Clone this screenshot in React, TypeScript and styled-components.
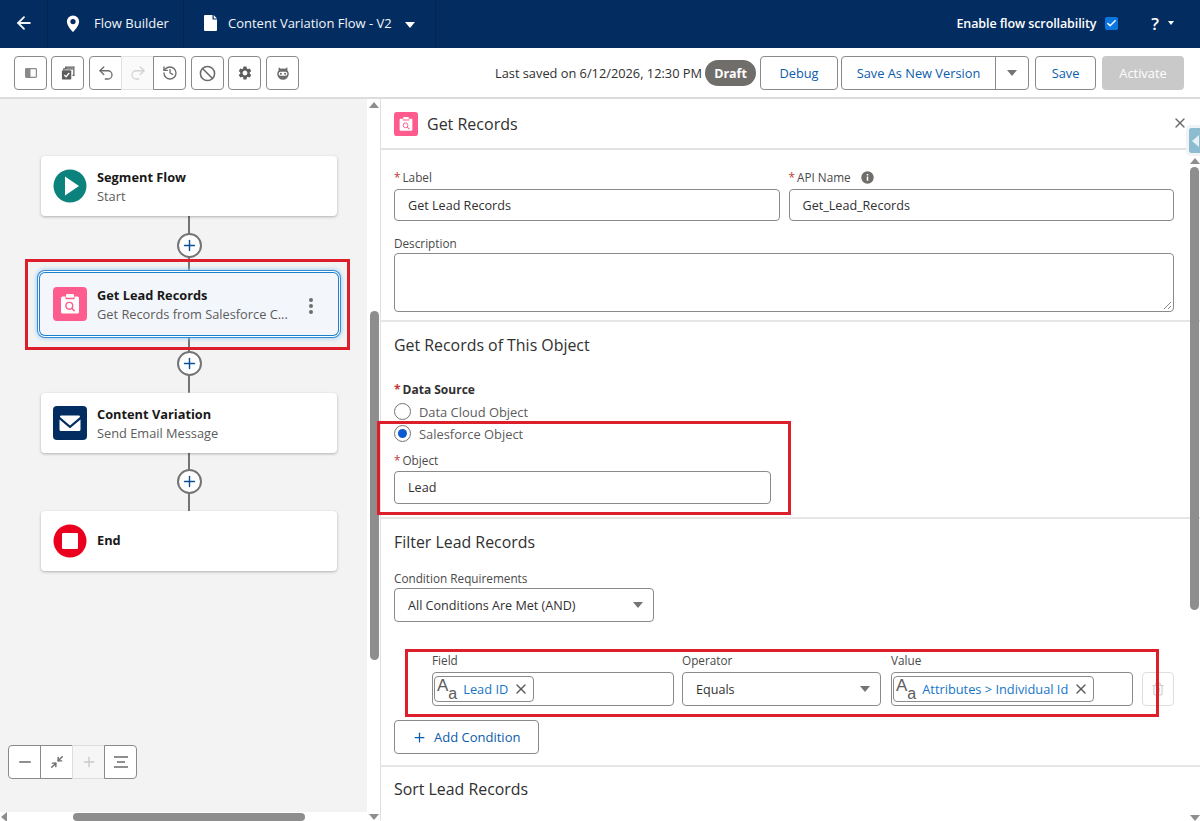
import React from "react";
import styled, { createGlobalStyle } from "styled-components";
import { ArrowLeft, Undo2, Redo2, History, Ban, Check, X, Plus, Minus, Minimize2, Trash2 } from "lucide-react";
import { MdSettings } from "react-icons/md";

const font = `"Open Sans", "Noto Sans", "Liberation Sans", sans-serif`;

const Global = createGlobalStyle`
  html, body { margin: 0; padding: 0; height: 821px; overflow: hidden; background: #fff; }
  body { font-family: ${font}; font-size: 12.8px; color: #181818; }
  * { box-sizing: border-box; }
`;

const Page = styled.div`
  position: relative;
  width: 1200px;
  height: 821px;
  display: flex;
  flex-direction: column;
  overflow: hidden;
`;

const Header = styled.header`
  height: 48px;
  flex: none;
  background: #032d60;
  color: #fff;
  display: flex;
  align-items: stretch;
`;
const HeaderCell = styled.div<{ $w: number; $pad?: number }>`
  width: ${(p) => p.$w}px;
  display: flex;
  align-items: center;
  border-right: 1px solid #02264f;
  font-size: 13px;
  color: #f3f5f8;
  padding: 0 0 2px ${(p) => p.$pad ?? 18}px;
`;
const HeaderLabel = styled.span<{ $ml: number }>`
  margin-left: ${(p) => p.$ml}px;
  white-space: nowrap;
`;
const Caret = styled.span<{ $size?: number; $color?: string }>`
  display: inline-block;
  width: 0;
  height: 0;
  border-left: ${(p) => p.$size ?? 5}px solid transparent;
  border-right: ${(p) => p.$size ?? 5}px solid transparent;
  border-top: ${(p) => (p.$size ?? 5) + 1}px solid ${(p) => p.$color ?? "#fff"};
`;
const HeaderRight = styled.div`
  margin-left: auto;
  display: flex;
  align-items: center;
  padding: 0 26px 2px 0;
  font-size: 12.5px;
  letter-spacing: -0.1px;
  font-weight: 600;
  color: #fff;
`;
const CheckBox = styled.span`
  width: 13px;
  height: 13px;
  margin-left: 9px;
  border-radius: 2px;
  background: #0b76e0;
  display: flex;
  align-items: center;
  justify-content: center;
`;
const Help = styled.span`
  margin-left: 33px;
  margin-right: 9px;
  font-size: 17px;
  font-weight: 600;
`;

const Toolbar = styled.div`
  height: 51px;
  flex: none;
  display: flex;
  align-items: center;
  padding: 1px 16px 0 14px;
  border-bottom: 2px solid #dcdcdc;
`;
const IconBtn = styled.button<{ $mr?: number }>`
  width: 33px;
  height: 34px;
  padding: 0;
  margin-right: ${(p) => p.$mr ?? 4}px;
  background: #fff;
  border: 1px solid #8a8a8a;
  border-radius: 4px;
  display: flex;
  align-items: center;
  justify-content: center;
  color: #6b6b6b;
`;
const BtnGroup = styled.div`
  display: flex;
  margin-right: 5px;
  margin-left: 1px;
`;
const GroupBtn = styled.button<{ $disabled?: boolean }>`
  width: 33px;
  height: 34px;
  padding: 0;
  margin-left: -1px;
  background: ${(p) => (p.$disabled ? "#fafafa" : "#fff")};
  border: 1px solid ${(p) => (p.$disabled ? "#e2e2e2" : "#8a8a8a")};
  display: flex;
  align-items: center;
  justify-content: center;
  color: ${(p) => (p.$disabled ? "#d2d2d2" : "#6b6b6b")};
  &:first-child { border-radius: 4px 0 0 4px; margin-left: 0; }
  &:last-child { border-radius: 0 4px 4px 0; }
`;
const ToolRight = styled.div`
  margin-left: auto;
  display: flex;
  align-items: center;
`;
const Saved = styled.span`
  font-size: 12.8px;
  color: #303030;
  white-space: nowrap;
`;
const Draft = styled.span`
  margin-left: 3px;
  width: 51px;
  height: 26px;
  background: #706e6b;
  border-radius: 13px;
  color: #fff;
  font-weight: 700;
  font-size: 12.5px;
  display: flex;
  align-items: center;
  justify-content: center;
`;
const OutlineBtn = styled.button<{ $w: number; $ml?: number }>`
  width: ${(p) => p.$w}px;
  height: 34px;
  margin-left: ${(p) => p.$ml ?? 4}px;
  background: #fff;
  border: 1px solid #8a8a8a;
  border-radius: 4px;
  color: #0b5cab;
  font-family: ${font};
  font-size: 12.8px;
  padding: 0;
`;
const SplitBtn = styled.div`
  margin-left: 3px;
  width: 188px;
  height: 34px;
  border: 1px solid #8a8a8a;
  border-radius: 4px;
  display: flex;
  color: #0b5cab;
  font-size: 12.8px;
`;
const SplitMain = styled.span`
  flex: 1;
  display: flex;
  align-items: center;
  justify-content: center;
  border-right: 1px solid #8a8a8a;
`;
const SplitCaret = styled.span`
  width: 32px;
  display: flex;
  align-items: center;
  justify-content: center;
`;
const ActivateBtn = styled.button`
  width: 82px;
  height: 34px;
  margin-left: 6px;
  background: #c9c9c9;
  color: #fff;
  border: none;
  border-radius: 4px;
  font-family: ${font};
  font-size: 12.8px;
`;

const Body = styled.div`
  flex: 1;
  display: flex;
  min-height: 0;
`;
const CanvasColumn = styled.div`
  position: relative;
  width: 381px;
  flex: none;
  border-right: 1px solid #e0e0e0;
  overflow: hidden;
`;
const Canvas = styled.div`
  width: 367px;
  height: 713px;
  background: #f3f3f3;
  padding: 57px 0 0 41px;
  display: flex;
  flex-direction: column;
`;
const Node = styled.div<{ $selected?: boolean }>`
  width: 296px;
  height: 60px;
  flex: none;
  background: ${(p) => (p.$selected ? "#f3f6fb" : "#fff")};
  border-radius: 4px;
  display: flex;
  align-items: center;
  padding: 0 0 0 12px;
  position: relative;
  box-shadow: ${(p) =>
    p.$selected
      ? "0 0 0 1px #f3f6fb, 0 0 0 2px #1b7fcf, 0 0 0 3px #fff, 0 0 0 4px #2f8ddb, 0 0 5px 4px #8cc4ef"
      : "0 1px 3px rgba(0,0,0,.28)"};
`;
const NodeText = styled.div<{ $solo?: boolean }>`
  margin-left: 10px;
  padding: ${(p) => (p.$solo ? "0 0 2px" : "2px 0 0")};
  min-width: 0;
  line-height: 19px;
`;
const NodeTitle = styled.div`
  font-weight: 700;
  color: #181818;
`;
const NodeSub = styled.div`
  color: #5c5c5c;
  white-space: nowrap;
`;
const NodeMenu = styled.span`
  position: absolute;
  right: 24px;
  top: 24px;
  display: flex;
  flex-direction: column;
  gap: 2px;
`;
const Dot = styled.i`
  width: 4px;
  height: 4px;
  border-radius: 50%;
  background: #706e6b;
`;
const Connector = styled.div`
  width: 296px;
  height: 58.4px;
  flex: none;
  display: flex;
  align-items: center;
  justify-content: center;
  background: linear-gradient(#747474, #747474) center / 2px 100% no-repeat;
`;
const PlusCircle = styled.span`
  width: 25px;
  height: 25px;
  border-radius: 50%;
  background: #fff;
  border: 2px solid #747474;
  display: flex;
  align-items: center;
  justify-content: center;
  color: #0b4f94;
`;
const ZoomBar = styled.div`
  position: absolute;
  left: 8px;
  top: 646px;
  display: flex;
`;
const ZoomBtn = styled.span<{ $disabled?: boolean }>`
  width: 33px;
  height: 34px;
  margin-left: -1px;
  background: ${(p) => (p.$disabled ? "#f6f6f6" : "#fff")};
  border: 1px solid ${(p) => (p.$disabled ? "#dedede" : "#8a8a8a")};
  color: ${(p) => (p.$disabled ? "#c9c9c9" : "#6b6b6b")};
  display: flex;
  align-items: center;
  justify-content: center;
  &:first-child { margin-left: 0; border-radius: 4px 0 0 4px; }
  &:last-child { border-radius: 0 4px 4px 0; }
`;
const VThumb = styled.div<{ $left: number; $top: number; $h: number }>`
  position: absolute;
  left: ${(p) => p.$left}px;
  top: ${(p) => p.$top}px;
  width: 9px;
  height: ${(p) => p.$h}px;
  border-radius: 5px;
  background: #8e8e8e;
`;
const HThumb = styled.div`
  position: absolute;
  left: 73px;
  top: 714px;
  width: 232px;
  height: 8px;
  border-radius: 4px;
  background: #8e8e8e;
`;
const Arrow = styled.span<{ $dir: "up" | "down" | "left"; $left: number; $top: number }>`
  position: absolute;
  left: ${(p) => p.$left}px;
  top: ${(p) => p.$top}px;
  width: 0;
  height: 0;
  ${(p) =>
    p.$dir === "up"
      ? "border-left:5px solid transparent;border-right:5px solid transparent;border-bottom:6px solid #8e8e8e;"
      : p.$dir === "down"
      ? "border-left:5px solid transparent;border-right:5px solid transparent;border-top:6px solid #8e8e8e;"
      : "border-top:5px solid transparent;border-bottom:5px solid transparent;border-right:6px solid #8e8e8e;"}
`;

const Panel = styled.div`
  position: relative;
  flex: 1;
  min-width: 0;
  overflow: hidden;
`;
const PanelHeader = styled.div`
  height: 51px;
  display: flex;
  align-items: center;
  padding: 0 0 0 13px;
  border-bottom: 2px solid #e2e2e2;
  font-size: 16px;
  color: #303030;
`;
const PanelTitle = styled.span`
  margin-left: 9px;
`;
const Close = styled.span`
  position: absolute;
  right: 12px;
  top: 16px;
  color: #6b6b6b;
  display: flex;
`;
const SideTab = styled.div`
  position: absolute;
  left: 805px;
  top: 26px;
  width: 15px;
  height: 31px;
  background: #8dbcd0;
  border: 3px solid #f1f4f6;
  border-right: none;
  border-radius: 5px 0 0 5px;
  display: flex;
  align-items: center;
  padding-left: 3px;
  &::before {
    content: "";
    border-top: 6px solid transparent;
    border-bottom: 6px solid transparent;
    border-right: 7px solid #e8f1f5;
  }
`;
const Section = styled.section<{ $h: number; $bare?: boolean }>`
  display: flow-root;
  height: ${(p) => p.$h}px;
  padding: 0 26px 0 13px;
  border-bottom: ${(p) => (p.$bare ? "none" : "2px solid #e6e6e6")};
`;
const Row = styled.div<{ $mt: number }>`
  display: flex;
  gap: 9px;
  margin-top: ${(p) => p.$mt}px;
`;
const Field = styled.div<{ $w?: number; $ml?: number }>`
  width: ${(p) => (p.$w ? `${p.$w}px` : "auto")};
  flex: ${(p) => (p.$w ? "none" : "1")};
  margin-left: ${(p) => p.$ml ?? 0}px;
`;
const Label = styled.label<{ $mb?: number }>`
  display: flex;
  align-items: center;
  height: 16px;
  margin-bottom: ${(p) => p.$mb ?? 4}px;
  font-size: 11.75px;
  color: #4a4a4a;
`;
const Req = styled.span`
  color: #c23934;
  margin-right: 2px;
`;
const InfoIcon = styled.svg`
  margin-left: 10px;
`;
const Input = styled.div<{ $h?: number }>`
  height: ${(p) => p.$h ?? 33}px;
  border: 1px solid #8a8a8a;
  border-radius: 4px;
  background: #fff;
  display: flex;
  align-items: center;
  padding: 0 13px;
  color: #303030;
  font-size: 12.6px;
  position: relative;
`;
const SelectCaret = styled.span`
  margin-left: auto;
  margin-right: -3px;
  display: flex;
`;
const ResizeGrip = styled.svg`
  position: absolute;
  right: 1px;
  bottom: 1px;
`;
const SectionTitle = styled.h2<{ $mt: number }>`
  margin: ${(p) => p.$mt}px 0 0;
  font-size: 15.9px;
  font-weight: 400;
  line-height: 22px;
  color: #303030;
`;
const BoldLabel = styled.div`
  margin-top: 26px;
  font-size: 12px;
  font-weight: 700;
  color: #303030;
  line-height: 16px;
`;
const RadioRow = styled.div<{ $mt: number }>`
  display: flex;
  align-items: center;
  margin-top: ${(p) => p.$mt}px;
  height: 17px;
  color: #5c5c5c;
  font-size: 12.9px;
`;
const Radio = styled.span<{ $on?: boolean }>`
  width: 17px;
  height: 17px;
  border-radius: 50%;
  border: 1px solid #747474;
  background: #fff;
  margin-right: 8px;
  display: flex;
  align-items: center;
  justify-content: center;
  &::after {
    content: "";
    display: ${(p) => (p.$on ? "block" : "none")};
    width: 9px;
    height: 9px;
    border-radius: 50%;
    background: #0b5cd0;
  }
`;
const ConditionRow = styled.div`
  display: flex;
  margin: 30px 0 0 38px;
  align-items: flex-end;
`;
const Pill = styled.span`
  height: 26px;
  margin-left: -12px;
  border: 1px solid #8a8a8a;
  border-radius: 4px;
  display: flex;
  align-items: center;
  padding: 0 4px 0 2px;
  color: #1576c8;
  font-size: 12.8px;
  white-space: nowrap;
`;
const PillIcon = styled.span`
  font-family: "Liberation Sans", sans-serif;
  color: #5c5c5c;
  display: flex;
  align-items: flex-end;
  line-height: 1;
  margin: 0 6px 7px 0;
  font-size: 17px;
`;
const PillIconSmall = styled.span`
  margin-left: 0;
  margin-bottom: -8px;
  font-size: 16px;
`;
const PillClose = styled.span`
  display: flex;
  color: #5c5c5c;
  margin-left: 5px;
`;
const TrashBtn = styled.span`
  width: 32px;
  height: 34px;
  margin-left: 9px;
  border: 1px solid #dedede;
  border-radius: 4px;
  display: flex;
  align-items: center;
  justify-content: center;
  color: #cfcfcf;
`;
const AddBtn = styled.div`
  margin-top: 14px;
  width: 145px;
  height: 34px;
  border: 1px solid #8a8a8a;
  border-radius: 4px;
  display: flex;
  align-items: center;
  padding-left: 17px;
  color: #0b5cab;
  font-size: 13px;
`;
const AddLabel = styled.span`
  margin-left: 7px;
`;
const Highlight = styled.div<{ $l: number; $t: number; $w: number; $h: number }>`
  position: absolute;
  left: ${(p) => p.$l}px;
  top: ${(p) => p.$t}px;
  width: ${(p) => p.$w}px;
  height: ${(p) => p.$h}px;
  border: 3px solid #dc1f2b;
  pointer-events: none;
`;

const MapPin = () => (
  <svg width="14" height="17" viewBox="1.5 0 13 17.5"><path fill="#fff" fillRule="evenodd" d="M8 0.5a6.3 6.3 0 0 0-6.3 6.3C1.7 11 6.5 16 7.4 17.1c.3.4.9.4 1.2 0C9.5 16 14.3 11 14.3 6.8A6.3 6.3 0 0 0 8 .5zm0 8.9a2.7 2.7 0 1 1 0-5.4 2.7 2.7 0 0 1 0 5.4z" /></svg>
);
const FileIcon = () => (
  <svg width="13" height="16" viewBox="0 0 13 16"><path fill="#fff" d="M1 0h7.5v4.5H13V15a1 1 0 0 1-1 1H1a1 1 0 0 1-1-1V1a1 1 0 0 1 1-1zm8.7 0L13 3.4H9.7z" /></svg>
);
const PanelIcon = () => (
  <svg width="12" height="10" viewBox="0 0 12 10"><rect x=".6" y=".6" width="10.8" height="8.8" rx=".8" fill="none" stroke="#8a8a8a" strokeWidth="1.2" /><rect x="1" y="1" width="4.5" height="8" fill="#8a8a8a" /></svg>
);
const CopyCheck = () => (
  <svg width="14" height="14" viewBox="0 0 15 15"><path fill="none" stroke="#5c5c5c" strokeWidth="1.3" d="M5 2.5V1.2h8.8V10h-1.5M3 4.5V3h9v1" /><rect x="1" y="4.5" width="10" height="10" rx="1" fill="#5c5c5c" /><path fill="none" stroke="#fff" strokeWidth="1.4" d="M3.4 9.5l2 2 3.4-4" /></svg>
);
const BotIcon = () => (
  <svg width="14" height="14" viewBox="0 0 16 16"><path fill="#6b6b6b" d="M3 1.5l2.6 1.7a7 7 0 0 1 4.8 0L13 1.5v3.4a6.6 6.6 0 1 1-10 0z" /><rect x="3" y="6.6" width="10" height="4.6" rx="2.3" fill="#fff" /><circle cx="5.6" cy="8.9" r="1.2" fill="#6b6b6b" /><circle cx="10.4" cy="8.9" r="1.2" fill="#6b6b6b" /></svg>
);
const PlayIcon = () => (
  <svg width="34" height="34" viewBox="0 0 34 34"><circle cx="17" cy="17" r="16.5" fill="#0b827c" /><path fill="#fff" d="M12 7.5v19L26 17z" /></svg>
);
const RecordsIcon = ({ size = 34 }: { size?: number }) => (
  <svg width={size} height={size} viewBox="0 0 34 34"><rect width="34" height="34" rx="4" fill="#fe5c8f" /><path fill="#fff" fillRule="evenodd" d="M9.5 9.5h3v2.7h9V9.5h3a1.5 1.5 0 0 1 1.5 1.5v14a1.5 1.5 0 0 1-1.5 1.5h-15A1.5 1.5 0 0 1 8 25V11a1.5 1.5 0 0 1 1.5-1.5z" /><rect x="13" y="7" width="8" height="3.8" rx="1.2" fill="#fff" /><circle cx="16.3" cy="18.8" r="3.4" fill="none" stroke="#fe5c8f" strokeWidth="1.4" /><path stroke="#fe5c8f" strokeWidth="1.5" d="M18.8 21.3l2.8 2.8" /></svg>
);
const MailIcon = () => (
  <svg width="34" height="34" viewBox="0 0 34 34"><rect width="34" height="34" rx="4" fill="#032d60" /><path fill="#fff" d="M8 9.5h18a1 1 0 0 1 .7 1.7L17 19.5 7.3 11.2A1 1 0 0 1 8 9.5zM6.5 13.5l9.8 8.3c.4.3 1 .3 1.4 0l9.8-8.3V23.5a1.5 1.5 0 0 1-1.5 1.5H8a1.5 1.5 0 0 1-1.5-1.5z" /></svg>
);
const EndIcon = () => (
  <svg width="34" height="34" viewBox="0 0 34 34"><circle cx="17" cy="17" r="16.5" fill="#ea001e" /><rect x="9" y="9" width="16" height="16" rx="1" fill="#fff" /></svg>
);
const FitIcon = () => (
  <svg width="14" height="12" viewBox="0 0 14 12"><path stroke="#6b6b6b" strokeWidth="1.6" d="M0 1h14M3 6h8M0 11h14" /></svg>
);

const NodeConnector = () => (
  <Connector>
    <PlusCircle><Plus size={17} strokeWidth={2} /></PlusCircle>
  </Connector>
);

const AaIcon = () => (
  <PillIcon>A<PillIconSmall>a</PillIconSmall></PillIcon>
);

export default function App() {
  return (
    <Page>
      <Global />
      <Header>
        <HeaderCell $w={48} $pad={14}><ArrowLeft size={20} strokeWidth={2.2} /></HeaderCell>
        <HeaderCell $w={136}><MapPin /><HeaderLabel $ml={14}>Flow Builder</HeaderLabel></HeaderCell>
        <HeaderCell $w={252} $pad={20}>
          <FileIcon /><HeaderLabel $ml={11}>Content Variation Flow - V2</HeaderLabel>
          <HeaderLabel $ml={13}><Caret /></HeaderLabel>
        </HeaderCell>
        <HeaderRight>
          Enable flow scrollability
          <CheckBox><Check size={11} strokeWidth={3} color="#fff" /></CheckBox>
          <Help>?</Help>
          <Caret $size={3} />
        </HeaderRight>
      </Header>
      <Toolbar>
        <IconBtn><PanelIcon /></IconBtn>
        <IconBtn><CopyCheck /></IconBtn>
        <BtnGroup>
          <GroupBtn><Undo2 size={18} strokeWidth={1.7} /></GroupBtn>
          <GroupBtn $disabled><Redo2 size={18} strokeWidth={1.7} /></GroupBtn>
          <GroupBtn><History size={16} /></GroupBtn>
        </BtnGroup>
        <IconBtn><Ban size={17} strokeWidth={2.2} /></IconBtn>
        <IconBtn $mr={5}><MdSettings size={16} color="#5c5c5c" /></IconBtn>
        <IconBtn><BotIcon /></IconBtn>
        <ToolRight>
          <Saved>Last saved on 6/12/2026, 12:30 PM</Saved>
          <Draft>Draft</Draft>
          <OutlineBtn $w={78}>Debug</OutlineBtn>
          <SplitBtn>
            <SplitMain>Save As New Version</SplitMain>
            <SplitCaret><Caret $color="#747474" /></SplitCaret>
          </SplitBtn>
          <OutlineBtn $w={61} $ml={6}>Save</OutlineBtn>
          <ActivateBtn>Activate</ActivateBtn>
        </ToolRight>
      </Toolbar>
      <Body>
        <CanvasColumn>
          <Canvas>
            <Node>
              <PlayIcon />
              <NodeText><NodeTitle>Segment Flow</NodeTitle><NodeSub>Start</NodeSub></NodeText>
            </Node>
            <NodeConnector />
            <Node $selected>
              <RecordsIcon />
              <NodeText><NodeTitle>Get Lead Records</NodeTitle><NodeSub>Get Records from Salesforce C...</NodeSub></NodeText>
              <NodeMenu><Dot /><Dot /><Dot /></NodeMenu>
            </Node>
            <NodeConnector />
            <Node>
              <MailIcon />
              <NodeText><NodeTitle>Content Variation</NodeTitle><NodeSub>Send Email Message</NodeSub></NodeText>
            </Node>
            <NodeConnector />
            <Node>
              <EndIcon />
              <NodeText $solo><NodeTitle>End</NodeTitle></NodeText>
            </Node>
          </Canvas>
          <ZoomBar>
            <ZoomBtn><Minus size={18} /></ZoomBtn>
            <ZoomBtn><Minimize2 size={14} strokeWidth={2.4} /></ZoomBtn>
            <ZoomBtn $disabled><Plus size={16} /></ZoomBtn>
            <ZoomBtn><FitIcon /></ZoomBtn>
          </ZoomBar>
          <Arrow $dir="up" $left={369} $top={3} />
          <VThumb $left={370} $top={212} $h={349} />
          <HThumb />
          <Arrow $dir="left" $left={1} $top={713} />
          <Arrow $dir="down" $left={369} $top={715} />
        </CanvasColumn>
        <Panel>
          <PanelHeader>
            <RecordsIcon size={24} />
            <PanelTitle>Get Records</PanelTitle>
          </PanelHeader>
          <Close><X size={16} /></Close>
          <SideTab />
          <Section $h={172}>
            <Row $mt={19}>
              <Field>
                <Label><Req>*</Req>Label</Label>
                <Input $h={32}>Get Lead Records</Input>
              </Field>
              <Field>
                <Label>
                  <Req>*</Req>API Name
                  <InfoIcon width="13" height="13" viewBox="0 0 13 13"><circle cx="6.5" cy="6.5" r="6.2" fill="#706e6b" /><path stroke="#fff" strokeWidth="1.5" d="M6.5 5.5v4.2M6.5 3v1.5" /></InfoIcon>
                </Label>
                <Input $h={32}>Get_Lead_Records</Input>
              </Field>
            </Row>
            <Row $mt={14}>
              <Field>
                <Label $mb={2}>Description</Label>
                <Input $h={59}>
                  <ResizeGrip width="9" height="9" viewBox="0 0 9 9"><path stroke="#8a8a8a" d="M1 8l7-7M5 8l3-3" /></ResizeGrip>
                </Input>
              </Field>
            </Row>
          </Section>
          <Section $h={197}>
            <SectionTitle $mt={12}>Get Records of This Object</SectionTitle>
            <BoldLabel><Req>*</Req>Data Source</BoldLabel>
            <RadioRow $mt={5}><Radio />Data Cloud Object</RadioRow>
            <RadioRow $mt={5}><Radio $on />Salesforce Object</RadioRow>
            <Field $w={377}>
              <Row $mt={10}><Label $mb={3}><Req>*</Req>Object</Label></Row>
              <Input>Lead</Input>
            </Field>
          </Section>
          <Section $h={248}>
            <SectionTitle $mt={12}>Filter Lead Records</SectionTitle>
            <Row $mt={17}><Label $mb={2}>Condition Requirements</Label></Row>
            <Field $w={260}>
              <Input $h={34}>All Conditions Are Met (AND)<SelectCaret><Caret $color="#747474" /></SelectCaret></Input>
            </Field>
            <ConditionRow>
              <Field $w={242}>
                <Label>Field</Label>
                <Input $h={34}><Pill><AaIcon />Lead ID<PillClose><X size={16} /></PillClose></Pill></Input>
              </Field>
              <Field $w={199} $ml={8}>
                <Label>Operator</Label>
                <Input $h={34}>Equals<SelectCaret><Caret $color="#747474" /></SelectCaret></Input>
              </Field>
              <Field $w={242} $ml={10}>
                <Label>Value</Label>
                <Input $h={34}><Pill><AaIcon />Attributes &gt; Individual Id<PillClose><X size={16} /></PillClose></Pill></Input>
              </Field>
              <TrashBtn><Trash2 size={14} /></TrashBtn>
            </ConditionRow>
            <AddBtn><Plus size={15} /><AddLabel>Add Condition</AddLabel></AddBtn>
          </Section>
          <Section $h={50} $bare>
            <SectionTitle $mt={11}>Sort Lead Records</SectionTitle>
          </Section>
          <Arrow $dir="up" $left={809} $top={59} />
          <VThumb $left={809} $top={68} $h={443} />
          <Arrow $dir="down" $left={809} $top={716} />
        </Panel>
      </Body>
      <Highlight $l={25} $t={259} $w={325} $h={91} />
      <Highlight $l={377} $t={421} $w={414} $h={94} />
      <Highlight $l={405} $t={649} $w={754} $h={68} />
    </Page>
  );
}
